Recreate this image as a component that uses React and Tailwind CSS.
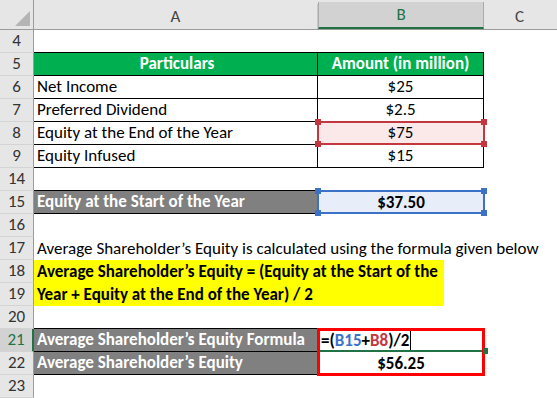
const FONT = { fontFamily: 'Calibri, Carlito, Lato, "Liberation Sans", sans-serif' };

// Row number on the left edge of the sheet
const RowHead = ({ n, active }) => (
  <div
    className={`w-[34px] shrink-0 flex items-end justify-center pb-[1px] text-[17px] leading-[21px] border-b border-b-[#d4d4d4] ${
      active
        ? 'bg-[#d2d2d2] text-[#217346] border-r-2 border-r-[#217346]'
        : 'bg-[#e6e6e6] text-[#333] border-r border-r-[#9b9b9b]'
    }`}
  >
    {n}
  </div>
);

const Row = ({ n, active, children }) => (
  <div className="flex h-[23px]">
    <RowHead n={n} active={active} />
    {children}
  </div>
);

// Selection frame with small squares at the corners (formula references)
const RefFrame = ({ color }) => {
  const sq = `absolute w-[6px] h-[6px] ${color.bg}`;
  return (
    <div className={`absolute -left-[1px] -top-[1px] w-[168px] h-[24px] border-2 ${color.border}`}>
      <span className={`${sq} -left-[4px] -top-[4px]`} />
      <span className={`${sq} -right-[4px] -top-[4px]`} />
      <span className={`${sq} -left-[4px] -bottom-[4px]`} />
      <span className={`${sq} -right-[4px] -bottom-[4px]`} />
    </div>
  );
};

const A = ({ className = '', children }) => (
  <div className={`w-[284px] shrink-0 flex items-end pl-[3px] pb-[1px] whitespace-nowrap text-[17px] leading-[21px] ${className}`}>
    {children}
  </div>
);

const B = ({ className = '', children }) => (
  <div className={`w-[166px] shrink-0 flex items-end justify-center pb-[1px] whitespace-nowrap text-[17px] leading-[21px] ${className}`}>
    {children}
  </div>
);

export default function App() {
  return (
    <div className="w-[557px] h-[398px] overflow-hidden bg-white text-black" style={FONT}>
      {/* column headers */}
      <div className="flex h-[30px] bg-[#e6e6e6] border-b border-[#9b9b9b]">
        <div className="w-[34px] shrink-0 border-r border-[#9b9b9b] flex items-end justify-end pr-[3px] pb-[3px]">
          <div className="w-0 h-0 border-l-[15px] border-l-transparent border-b-[15px] border-b-[#b4b4b4]" />
        </div>
        <div className="w-[284px] shrink-0 flex flex-col">
          <div className="h-[8px]" />
          <div className="flex-1 flex items-center justify-center text-[17px] text-[#444] border-r border-[#c8c8c8]">A</div>
        </div>
        <div className="w-[166px] shrink-0 flex flex-col">
          <div className="h-[8px]" />
          <div className="flex-1 flex items-center justify-center text-[17px] text-[#217346] bg-[#d2d2d2] border-x border-[#ababab] border-b-2 border-b-[#217346]">
            B
          </div>
        </div>
        <div className="flex-1 flex flex-col">
          <div className="h-[8px]" />
          <div className="flex-1 flex items-center justify-center text-[17px] text-[#444] pr-[2px]">C</div>
        </div>
      </div>

      <Row n="4">
        <A className="border-b border-black" />
        <B className="border-b border-black" />
      </Row>
      <Row n="5">
        <A className="bg-[#00b050] text-white font-bold justify-center pl-0 border-r border-b border-black">Particulars</A>
        <B className="bg-[#00b050] text-white font-bold border-r border-b border-black">Amount (in million)</B>
      </Row>
      <Row n="6">
        <A className="border-r border-b border-black">Net Income</A>
        <B className="border-r border-b border-black">$25</B>
      </Row>
      <Row n="7">
        <A className="border-r border-b border-black">Preferred Dividend</A>
        <B className="border-r border-b border-black">$2.5</B>
      </Row>
      <Row n="8">
        <A className="border-r border-b border-black">Equity at the End of the Year</A>
        <B className="relative bg-[#fbe9e9] border-r border-b border-black">
          <RefFrame color={{ border: 'border-[#c4373e]', bg: 'bg-[#c4373e]' }} />
          <span className="relative">$75</span>
        </B>
      </Row>
      <Row n="9">
        <A className="border-r border-b border-black">Equity Infused</A>
        <B className="border-r border-b border-black">$15</B>
      </Row>
      <Row n="14">
        <A className="border-b border-black" />
        <B />
      </Row>
      <Row n="15">
        <A className="bg-[#808080] text-white font-bold border-r border-b border-black">Equity at the Start of the Year</A>
        <B className="relative bg-[#e8eef9] font-bold">
          <RefFrame color={{ border: 'border-[#3b72c8]', bg: 'bg-[#3b72c8]' }} />
          <span className="relative">$37.50</span>
        </B>
      </Row>
      <Row n="16" />
      <Row n="17">
        <A>Average Shareholder’s Equity is calculated using the formula given below</A>
      </Row>
      <Row n="18">
        <div className="w-[410px] shrink-0 bg-[#ffff00] flex items-end pl-[3px] pb-[1px] whitespace-nowrap text-[17px] leading-[21px] font-bold">
          Average Shareholder’s Equity = (Equity at the Start of the
        </div>
      </Row>
      <Row n="19">
        <div className="w-[410px] shrink-0 bg-[#ffff00] flex items-end pl-[3px] pb-[1px] whitespace-nowrap text-[17px] leading-[21px] font-bold">
          Year + Equity at the End of the Year) / 2
        </div>
      </Row>
      <Row n="20">
        <A className="border-b border-black" />
        <B />
      </Row>
      <Row n="21" active>
        <A className="w-[283px] bg-[#808080] text-white font-bold border-r border-b border-black">
          Average Shareholder’s Equity Formula
        </A>
        <B className="relative justify-start pl-[3px] font-bold">
          <div className="absolute -left-[1px] -top-[1px] w-[168px] h-[48px] border-[3px] border-[#ff0000]" />
          <div className="absolute left-[2px] right-[2px] bottom-[0px] h-[2px] bg-[#217346]" />
          <div className="absolute -right-[4px] bottom-[-2px] w-[5px] h-[6px] bg-[#217346]" />
          <span className="relative">
            =(<span className="text-[#3b72c8]">B15</span>+<span className="text-[#c4373e]">B8</span>)/2
          </span>
          <span className="relative inline-block w-px h-[19px] bg-black ml-[1px] mb-[1px]" />
        </B>
      </Row>
      <Row n="22">
        <A className="bg-[#808080] text-white font-bold border-r border-b border-black">Average Shareholder’s Equity</A>
        <B className="font-bold">$56.25</B>
      </Row>
      <Row n="23" />
    </div>
  );
}
